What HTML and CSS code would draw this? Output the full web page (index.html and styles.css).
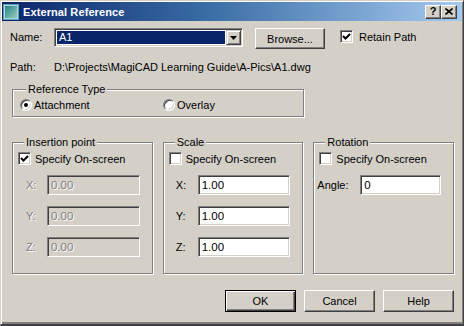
FILE: index.html
```html
<!DOCTYPE html>
<html>
<head>
<meta charset="utf-8">
<title>External Reference</title>
<link rel="stylesheet" href="styles.css">
</head>
<body>
<div class="window">
  <div class="titlebar">
    <svg class="app-icon" width="16" height="16" viewBox="0 0 16 16">
      <defs>
        <linearGradient id="ig" x1="0" y1="0" x2="1" y2="1">
          <stop offset="0" stop-color="#2f7f86"/>
          <stop offset="1" stop-color="#8fd0c0"/>
        </linearGradient>
      </defs>
      <rect x="0.5" y="0.5" width="15" height="15" fill="#a8d8e0" stroke="#5aa0b0"/>
      <rect x="2" y="2" width="12" height="12" fill="url(#ig)"/>
    </svg>
    <span class="title">External Reference</span>
    <div class="caption-buttons">
      <span class="cap-btn">?</span>
      <span class="cap-btn">
        <svg width="8" height="7" viewBox="0 0 8 7"><path d="M0.5 0.5 L7.5 6.5 M7.5 0.5 L0.5 6.5" stroke="#000" stroke-width="1.6"/></svg>
      </span>
    </div>
  </div>

  <div class="content">
    <div class="name-row">
      <span class="lbl name-lbl">Name:</span>
      <div class="combo">
        <span class="combo-text">A1</span>
        <span class="combo-btn"><svg width="7" height="4" viewBox="0 0 7 4"><path d="M0 0 H7 L3.5 4 Z" fill="#000"/></svg></span>
      </div>
      <button class="btn browse">Browse...</button>
      <label class="check retain"><span class="box"><svg width="9" height="9" viewBox="0 0 9 9"><path d="M1 4 L3.5 6.5 L8 2" fill="none" stroke="#000" stroke-width="2"/></svg></span>Retain Path</label>
    </div>

    <div class="path-row">
      <span class="lbl path-lbl">Path:</span>
      <span class="path-text">D:\Projects\MagiCAD Learning Guide\A-Pics\A1.dwg</span>
    </div>

    <fieldset class="group reftype">
      <legend>Reference Type</legend>
      <div class="radios">
        <label class="radio attach"><span class="dot on"></span>Attachment</label>
        <label class="radio overlay"><span class="dot"></span>Overlay</label>
      </div>
    </fieldset>

    <div class="groups">
      <fieldset class="group sub ins">
        <legend>Insertion point</legend>
        <label class="check"><span class="box"><svg width="9" height="9" viewBox="0 0 9 9"><path d="M1 4 L3.5 6.5 L8 2" fill="none" stroke="#000" stroke-width="2"/></svg></span>Specify On-screen</label>
        <div class="field disabled"><span class="flbl">X:</span><span class="input">0.00</span></div>
        <div class="field disabled"><span class="flbl">Y:</span><span class="input">0.00</span></div>
        <div class="field disabled"><span class="flbl">Z:</span><span class="input">0.00</span></div>
      </fieldset>
      <fieldset class="group sub scale">
        <legend>Scale</legend>
        <label class="check"><span class="box"></span>Specify On-screen</label>
        <div class="field"><span class="flbl">X:</span><span class="input">1.00</span></div>
        <div class="field"><span class="flbl">Y:</span><span class="input">1.00</span></div>
        <div class="field"><span class="flbl">Z:</span><span class="input">1.00</span></div>
      </fieldset>
      <fieldset class="group sub rot">
        <legend>Rotation</legend>
        <label class="check"><span class="box"></span>Specify On-screen</label>
        <div class="field"><span class="flbl">Angle:</span><span class="input">0</span></div>
      </fieldset>
    </div>

    <div class="buttons">
      <button class="btn default">OK</button>
      <button class="btn">Cancel</button>
      <button class="btn">Help</button>
    </div>
  </div>
</div>
</body>
</html>
```

FILE: styles.css
```css
* { box-sizing: border-box; }

html, body {
  margin: 0;
  padding: 0;
  background: #d4d0c8;
}

body {
  font-family: "Liberation Sans", Arial, sans-serif;
  font-size: 11px;
  color: #000;
}

.window {
  width: 464px;
  height: 326px;
  background: #d4d0c8;
  border: 1px solid;
  border-color: #d4d0c8 #404040 #404040 #d4d0c8;
  border-bottom-width: 2px;
  box-shadow: inset 1px 1px #fff, inset -1px -2px #808080;
  padding: 1px 1px 0 1px;
  overflow: hidden;
}

/* ---------- title bar ---------- */
.titlebar {
  height: 19px;
  display: flex;
  align-items: center;
  background: linear-gradient(to right, #0a246a 0%, #3a6ea5 45%, #a6caf0 100%);
  color: #fff;
  font-weight: bold;
  font-size: 11px;
}

.app-icon {
  display: block;
  margin-left: 1px;
  flex: none;
}

.title {
  margin-left: 4px;
  letter-spacing: 0.1px;
}

.caption-buttons {
  margin-left: auto;
  margin-right: 5px;
  display: flex;
}

.cap-btn {
  width: 16px;
  height: 14px;
  display: flex;
  align-items: center;
  justify-content: center;
  background: #d4d0c8;
  color: #000;
  font-weight: bold;
  font-size: 11px;
  border: 1px solid;
  border-color: #fff #404040 #404040 #fff;
  box-shadow: inset -1px -1px #808080;
  line-height: 1;
}

/* ---------- generic controls ---------- */
.content {
  padding: 0 8px;
}

.lbl { display: inline-block; }

.btn {
  font-family: inherit;
  font-size: 11px;
  color: #000;
  background: #d4d0c8;
  border: 1px solid;
  border-color: #fff #404040 #404040 #fff;
  box-shadow: inset -1px -1px #808080;
  padding: 0;
  height: 22px;
  width: 71px;
}

.btn.default {
  border: 1px solid #000;
  box-shadow: inset 1px 1px #fff, inset -1px -1px #404040, inset -2px -2px #808080;
}

.check {
  display: flex;
  align-items: center;
  height: 13px;
  white-space: nowrap;
}

.box {
  width: 13px;
  height: 13px;
  flex: none;
  background: #fff;
  border: 1px solid;
  border-color: #808080 #fff #fff #808080;
  box-shadow: inset 1px 1px #404040, inset -1px -1px #d4d0c8;
  display: flex;
  align-items: center;
  justify-content: center;
  margin-right: 4px;
}

.box svg { display: block; }

/* ---------- name row ---------- */
.name-row {
  margin-top: 7px;
  display: flex;
  align-items: flex-start;
  height: 21px;
}

.name-lbl {
  width: 44px;
  line-height: 19px;
}

.combo {
  width: 189px;
  height: 19px;
  display: flex;
  background: #fff;
  border: 1px solid;
  border-color: #808080 #fff #fff #808080;
  box-shadow: inset 1px 1px #404040, inset -1px -1px #d4d0c8;
  padding: 2px 2px 2px 2px;
}

.combo-text {
  flex: 1;
  background: #0a246a;
  color: #fff;
  line-height: 13px;
  padding-left: 2px;
  margin-right: 1px;
}

.combo-btn {
  width: 15px;
  height: 15px;
  margin-top: -1px;
  margin-bottom: -1px;
  margin-right: -1px;
  background: #d4d0c8;
  border: 1px solid;
  border-color: #d4d0c8 #404040 #404040 #d4d0c8;
  box-shadow: inset 1px 1px #fff, inset -1px -1px #808080;
  display: flex;
  align-items: center;
  justify-content: center;
}

.combo-btn svg { display: block; }

.browse {
  margin-left: 12px;
  width: 70px;
  height: 21px;
}

.retain {
  margin-left: 15px;
  margin-top: 2px;
}

.retain .box { margin-right: 6px; }

/* ---------- path row ---------- */
.path-row {
  margin-top: 11px;
  display: flex;
  line-height: 14px;
}

.path-lbl { width: 44px; }

/* ---------- group boxes ---------- */
.group {
  margin: 0;
  border: 1px solid #808080;
  box-shadow: inset 1px 1px #fff, 1px 1px #fff;
  padding: 0;
  min-width: 0;
}

.group legend {
  margin-left: 6px;
  padding: 0 2px;
  line-height: 13px;
  background: #d4d0c8;
}

.reftype {
  margin: 9px 0 0 2px;
  width: 292px;
  padding: 0 0 5px 7px;
}

.radios {
  margin-top: 2px;
  display: flex;
  height: 13px;
}

.radio {
  display: flex;
  align-items: center;
  white-space: nowrap;
}

.radio.attach { width: 143px; }

.dot {
  position: relative;
  width: 12px;
  height: 12px;
  border-radius: 50%;
  background: #fff;
  border: 1px solid;
  border-color: #808080 #fff #fff #808080;
  box-shadow: inset 1px 1px #404040, inset -1px -1px #d4d0c8;
  margin-right: 2px;
  flex: none;
}

.dot.on::after {
  content: "";
  position: absolute;
  left: 3px;
  top: 3px;
  width: 4px;
  height: 4px;
  border-radius: 50%;
  background: #000;
}

.groups {
  margin: 19px 0 0 2px;
  display: flex;
  gap: 10px;
}

.sub {
  width: 141px;
  height: 138px;
  padding: 0 5px;
}

.sub .check { margin-top: 3px; }

.field {
  display: flex;
  align-items: center;
  height: 20px;
  margin-top: 11px;
}

.sub .check + .field { margin-top: 10px; }

.input {
  height: 20px;
  background: #fff;
  border: 1px solid;
  border-color: #808080 #fff #fff #808080;
  box-shadow: inset 1px 1px #404040, inset -1px -1px #d4d0c8;
  padding: 0 3px;
  line-height: 18px;
  font-size: 11.5px;
}

.ins .flbl { margin-left: 8px; width: 21px; }
.ins .input { width: 93px; }

.scale .flbl { margin-left: 7px; width: 22px; }
.scale .input { width: 92px; }

.rot .flbl { margin-left: -2px; width: 43px; }
.rot .input { width: 81px; }

.disabled .flbl,
.disabled .input {
  color: #808080;
  text-shadow: 1px 1px #fff;
}

.disabled .input {
  background: #d4d0c8;
}

/* ---------- buttons ---------- */
.buttons {
  margin-top: 16px;
  display: flex;
  justify-content: flex-end;
  gap: 8px;
}
```
